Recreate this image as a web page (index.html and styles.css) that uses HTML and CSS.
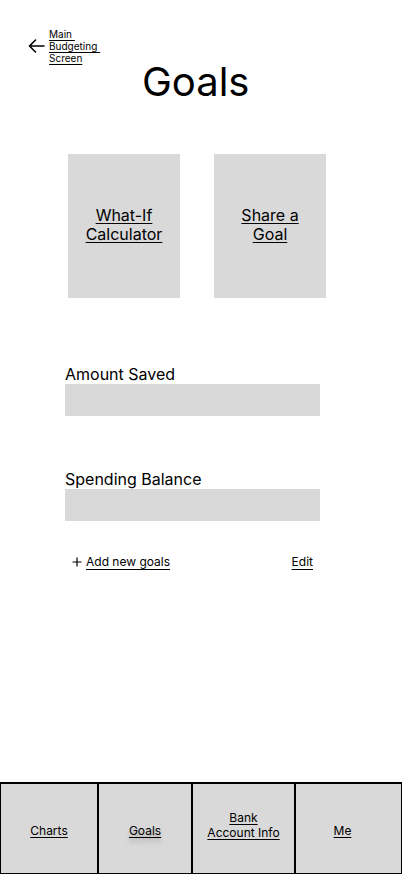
FILE: index.html
```html
<!DOCTYPE html>
<html lang="en">
<head>
<meta charset="utf-8">
<title>Goals</title>
<link rel="stylesheet" href="styles.css">
</head>
<body>
<div class="page">
  <header class="header">
    <a class="back" href="#">
      <svg class="back-icon" width="17" height="14" viewBox="0 0 17 14" aria-hidden="true">
        <path d="M16 7H1.5M7.5 1L1.5 7l6 6" fill="none" stroke="#000" stroke-width="1.6" stroke-linecap="round" stroke-linejoin="round"/>
      </svg>
      <span class="back-text"><span class="u">Main&nbsp;</span><br><span class="u">Budgeting&nbsp;</span><br><span class="u">Screen</span></span>
    </a>
    <h1 class="title">Goals</h1>
  </header>

  <section class="cards">
    <a class="card" href="#"><span class="card-text">What-If<br>Calculator</span></a>
    <a class="card" href="#"><span class="card-text">Share a<br>Goal</span></a>
  </section>

  <section class="fields">
    <div class="field">
      <div class="field-label">Amount Saved</div>
      <div class="field-box"></div>
    </div>
    <div class="field field-second">
      <div class="field-label">Spending Balance</div>
      <div class="field-box"></div>
    </div>
  </section>

  <div class="actions">
    <a class="add" href="#">
      <svg class="plus" width="10" height="10" viewBox="0 0 10 10" aria-hidden="true">
        <path d="M5 0.5V9.5M0.5 5H9.5" fill="none" stroke="#000" stroke-width="1.2"/>
      </svg>
      <span class="u">Add new goals</span>
    </a>
    <a class="edit u" href="#">Edit</a>
  </div>

  <nav class="nav">
    <a class="nav-item" href="#"><span class="u">Charts</span></a>
    <a class="nav-item" href="#"><span class="u shadow">Goals</span></a>
    <a class="nav-item nav-item-two" href="#"><span class="u">Bank<br>Account Info</span></a>
    <a class="nav-item nav-item-me" href="#"><span class="u">Me</span></a>
  </nav>
</div>
</body>
</html>
```

FILE: styles.css
```css
* { box-sizing: border-box; }

html, body {
  margin: 0;
  padding: 0;
  background: #fff;
}

body {
  font-family: Inter, "Noto Sans", sans-serif;
  color: #000;
}

a { color: #000; text-decoration: none; }

.u {
  text-decoration: underline;
  text-decoration-thickness: 1px;
  text-underline-offset: 2px;
}

.page {
  width: 402px;
  min-height: 874px;
  display: flex;
  flex-direction: column;
}

.header {
  display: grid;
  padding-top: 28px;
}

.back,
.title {
  grid-area: 1 / 1;
}

.back {
  justify-self: start;
  align-self: start;
  margin-left: 28px;
  display: flex;
  align-items: center;
  gap: 4px;
}

.back-icon { display: block; }

.back-text {
  font-size: 10px;
  line-height: 12px;
}

.title {
  margin: 30px 0 0 142px;
  justify-self: start;
  font-size: 40px;
  line-height: 48px;
  font-weight: 400;
}

.cards {
  display: flex;
  gap: 34px;
  padding-left: 68px;
  margin-top: 48px;
}

.card {
  width: 112px;
  height: 144px;
  background: #d9d9d9;
  display: flex;
  align-items: center;
  justify-content: center;
  text-align: center;
}

.card-text {
  font-size: 16px;
  line-height: 19px;
  text-decoration: underline;
  text-decoration-thickness: 1px;
  text-underline-offset: 2px;
  margin-top: -2px;
}

.fields {
  padding-left: 65px;
  margin-top: 68px;
}

.field { width: 255px; }

.field-second { margin-top: 55px; }

.field-label {
  font-size: 16px;
  line-height: 17px;
}

.field-box {
  height: 32px;
  background: #d9d9d9;
  margin-top: 1px;
}

.actions {
  display: flex;
  justify-content: space-between;
  align-items: center;
  width: 241px;
  margin: 34px 0 0 72px;
  font-size: 12px;
  line-height: 14.5px;
}

.actions .u { text-underline-offset: 3px; }

.add {
  display: flex;
  align-items: center;
  gap: 4px;
}

.plus { display: block; }

.nav {
  margin-top: auto;
  height: 92px;
  display: grid;
  grid-template-columns: 96px 92px 101px 1fr;
  gap: 2px;
  background: #000;
  border-top: 2px solid #000;
  border-left: 1px solid #000;
  border-right: 1px solid #000;
  border-bottom: 1px solid #000;
}

.nav-item {
  background: #d9d9d9;
  display: flex;
  align-items: center;
  justify-content: center;
  text-align: center;
  font-size: 12px;
  line-height: 14.5px;
  padding-top: 6px;
}

.nav-item-two { padding-top: 0; padding-bottom: 6px; }

.nav-item-me { padding-right: 12px; }

.shadow {
  text-shadow: 0 4px 4px rgba(0, 0, 0, 0.25);
}
```
